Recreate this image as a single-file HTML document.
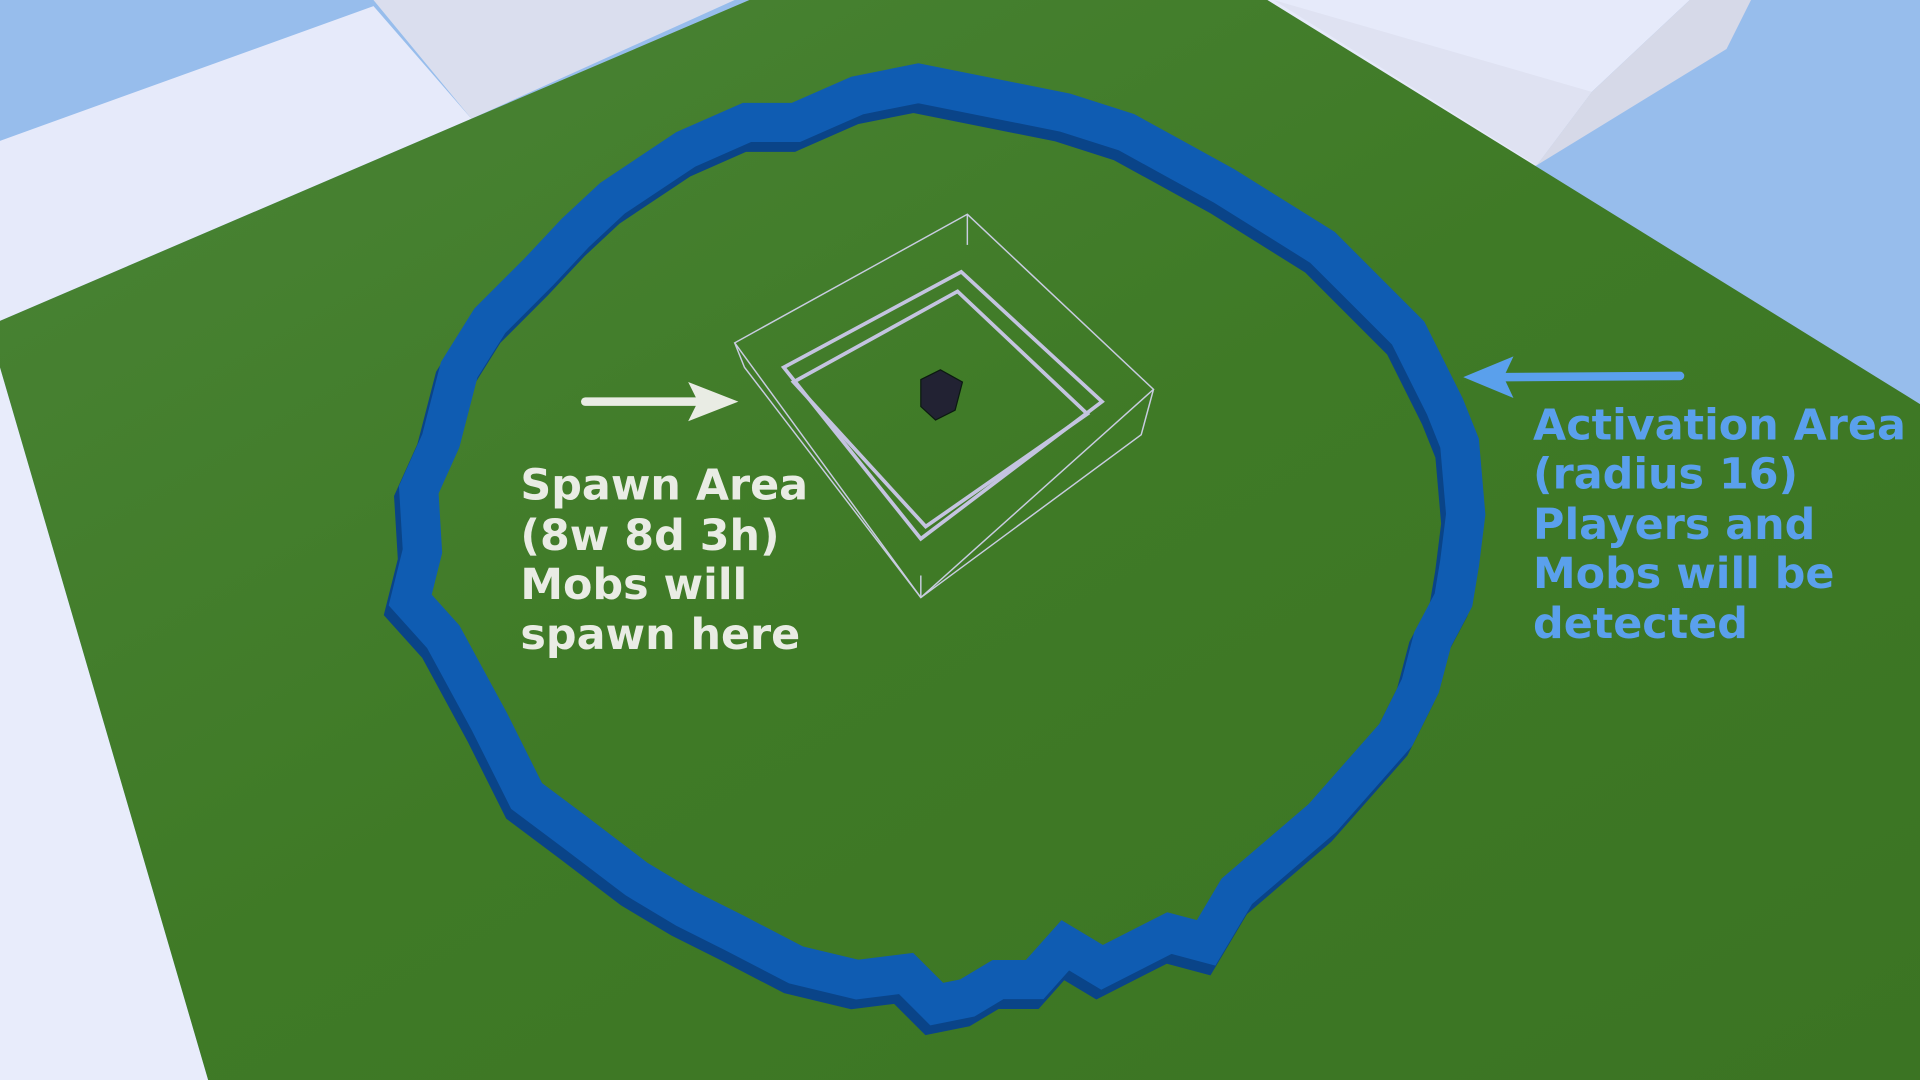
<!DOCTYPE html>
<html><head><meta charset="utf-8"><style>
html,body{margin:0;padding:0;width:1920px;height:1080px;overflow:hidden;background:#97bdec}
svg{display:block}
</style></head><body>
<svg width="1920" height="1080" viewBox="0 0 1568 882" preserveAspectRatio="none">
<defs>
<linearGradient id="g" x1="0" y1="0" x2="1" y2="1">
<stop offset="0" stop-color="#4a8436"/><stop offset="0.5" stop-color="#3f7a26"/><stop offset="1" stop-color="#3b7423"/>
</linearGradient>
</defs>
<rect width="1568" height="882" fill="#97bdec"/>
<polygon points="0,115 305,5 385,97 0,262" fill="#e6eafa"/>
<polygon points="305,0 600,0 385,97" fill="#dadeee"/>
<polygon points="0,300 170,882 0,882" fill="#e8ecfb"/>
<polygon points="1035,0 1380,0 1300,75 1255,135 1240,140" fill="#e6eafa"/>
<polygon points="1040,0 1300,75 1255,135" fill="#dfe2f2"/>
<polygon points="1300,75 1380,0 1430,0 1410,40 1255,135" fill="#d6d9e8"/>
<polygon points="0,262 385,97 612,0 1035,0 1568,330 1568,882 170,882 0,300" fill="url(#g)"/>
<!-- blue ring -->
<g fill="none" stroke-width="32" stroke-linejoin="miter">
<polygon transform="translate(-4,8)" stroke="#0a4488" points="650,100 700,78 750,68 800,78 870,92 920,108 960,130 1000,152 1080,202 1110,232 1150,272 1165,302 1180,332 1192,362 1197,420 1192,460 1187,490 1170,522 1160,560 1140,600 1080,668 1010,728 985,770 955,762 900,790 870,772 845,800 815,800 790,815 765,820 740,795 700,800 650,788 600,762 560,742 520,718 470,680 430,650 400,590 362,520 335,490 345,450 342,400 360,360 375,302 400,262 440,222 470,190 500,162 560,122 610,100"/>
<polygon stroke="#0f5cb2" points="650,100 700,78 750,68 800,78 870,92 920,108 960,130 1000,152 1080,202 1110,232 1150,272 1165,302 1180,332 1192,362 1197,420 1192,460 1187,490 1170,522 1160,560 1140,600 1080,668 1010,728 985,770 955,762 900,790 870,772 845,800 815,800 790,815 765,820 740,795 700,800 650,788 600,762 560,742 520,718 470,680 430,650 400,590 362,520 335,490 345,450 342,400 360,360 375,302 400,262 440,222 470,190 500,162 560,122 610,100"/>
</g>
<!-- cage -->
<g fill="none" stroke="#c8cce0" stroke-width="1.2">
<polygon points="600,280 790,175 942,318 752,488"/>
<polyline points="600,280 608,300 752,488"/>
<polyline points="942,318 932,355 752,488"/>
<line x1="752" y1="488" x2="752" y2="470"/>
<line x1="790" y1="175" x2="790" y2="200"/>
</g>
<g fill="none" stroke="#c4c4e0" stroke-width="3">
<polygon points="640,300 785,222 900,328 752,440"/>
<polygon points="648,312 782,238 888,338 756,430"/>
</g>
<g fill="#223" stroke="#0b1a10"><polygon points="752,310 768,302 786,312 780,335 764,343 752,332"/></g>
<line x1="478" y1="328" x2="570" y2="328" stroke="#e9ece4" stroke-width="7" stroke-linecap="round"/>
<polygon points="603,328 562,312 570,328 562,344" fill="#e9ece4"/>
<line x1="1372" y1="307" x2="1230" y2="308" stroke="#5aa0ec" stroke-width="7" stroke-linecap="round"/>
<polygon points="1195,308 1236,291 1228,308 1236,325" fill="#5aa0ec"/>
<g font-family="DejaVu Sans, Liberation Sans, sans-serif" font-weight="bold" font-size="35" fill="#e9ece4">
<text x="425" y="408">Spawn Area</text>
<text x="425" y="449">(8w 8d 3h)</text>
<text x="425" y="489">Mobs will</text>
<text x="425" y="530">spawn here</text>
</g>
<g font-family="DejaVu Sans, Liberation Sans, sans-serif" font-weight="bold" font-size="35" fill="#5aa0ec">
<text x="1252" y="359">Activation Area</text>
<text x="1252" y="399">(radius 16)</text>
<text x="1252" y="440">Players and</text>
<text x="1252" y="480">Mobs will be</text>
<text x="1252" y="521">detected</text>
</g>
</svg>
</body></html>
